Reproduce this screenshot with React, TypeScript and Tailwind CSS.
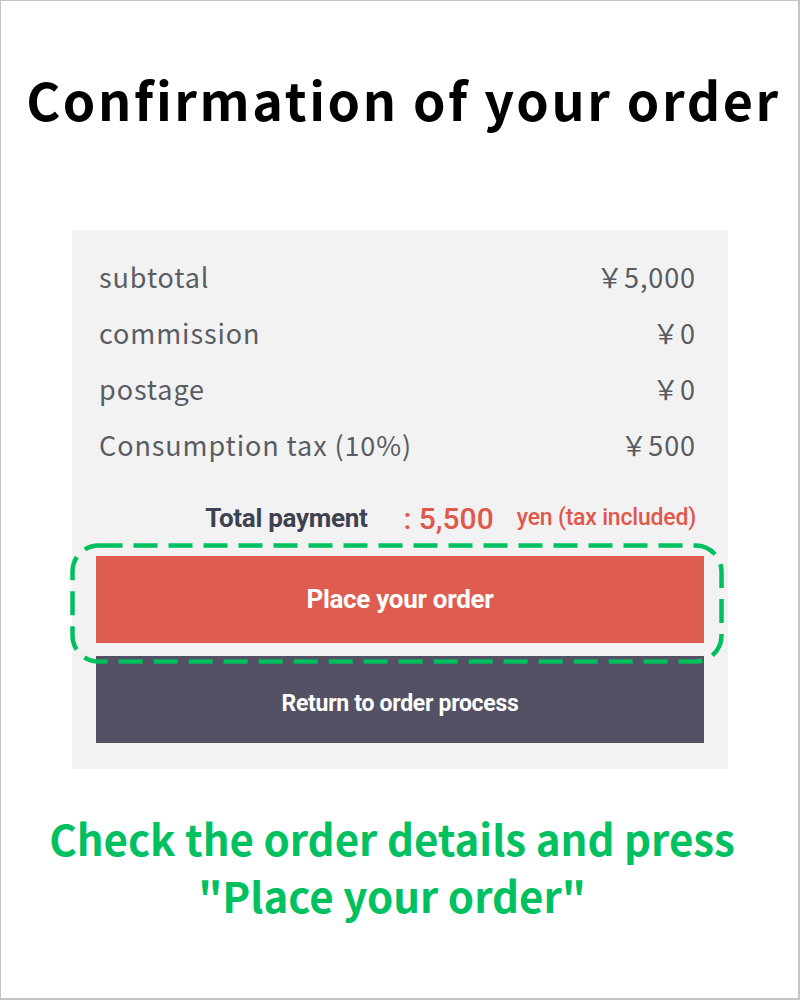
const rows = [
  { label: "subtotal", value: "￥5,000" },
  { label: "commission", value: "￥0" },
  { label: "postage", value: "￥0" },
  { label: "Consumption tax (10%)", value: "￥500" },
];

const App = () => {
  return (
    <div className="h-[1000px] w-[800px] overflow-hidden border border-r-2 border-b-2 border-[#c4c4c4] bg-white">
      <h1 className="pl-[8px] pt-[63px] text-center font-['Noto_Sans_CJK_JP',sans-serif] text-[52px] font-bold leading-[70px] tracking-[2.6px] text-black">
        Confirmation of your order
      </h1>

      <div className="ml-[71px] mt-[96px] w-[656px] bg-[#f2f2f2] px-[24px] pb-[26px] pt-[19px]">
        <div className="pl-[3px] pr-[8px] font-['Noto_Sans_CJK_JP',sans-serif] text-[27px] tracking-[0.9px] text-[#595c63]">
          {rows.map((row) => (
            <div key={row.label} className="flex h-[56px] items-center justify-between">
              <span>{row.label}</span>
              <span>{row.value}</span>
            </div>
          ))}
        </div>

        <div className="mt-[25px] flex h-[40px] items-center justify-end pr-[8px] font-['Roboto',sans-serif]">
          <span className="text-[26px] font-bold tracking-[-0.3px] text-[#3d4150]">Total payment</span>
          <span className="ml-[36px] text-[30px] font-medium text-[#e0574b]">: 5,500</span>
          <span className="ml-[23px] text-[23px] font-medium tracking-[-0.2px] text-[#e0574b]">
            yen (tax included)
          </span>
        </div>

        <div className="relative mt-[18px]">
          <svg
            className="pointer-events-none absolute left-[-26px] top-[-13px] h-[121px] w-[654px]"
            viewBox="0 0 654 121"
            fill="none"
          >
            <rect
              x="2.5"
              y="2.5"
              width="649"
              height="116"
              rx="26"
              stroke="#00bf5f"
              strokeWidth="4.5"
              strokeDasharray="24 11"
            />
          </svg>
          <button className="flex h-[87px] w-full items-center justify-center bg-[#df5d50] font-['Roboto',sans-serif] text-[26px] font-bold tracking-[-0.3px] text-white">
            Place your order
          </button>
          <button className="mt-[13px] flex h-[87px] w-full items-center justify-center bg-[#535163] pt-[10px] font-['Roboto',sans-serif] text-[23px] font-bold tracking-[-0.3px] text-white">
            Return to order process
          </button>
        </div>
      </div>

      <p className="mt-[40px] pr-[15px] text-center font-['Noto_Sans_CJK_JP',sans-serif] text-[42px] font-bold leading-[57px] text-[#00c060]">
        Check the order details and press
        <br />
        "Place your order"
      </p>
    </div>
  );
};

export default App;
